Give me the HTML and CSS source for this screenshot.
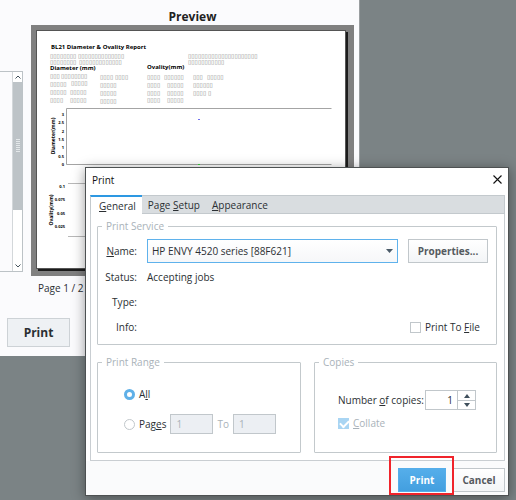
FILE: index.html
```html
<!DOCTYPE html>
<html lang="en">
<head>
  <meta charset="UTF-8">
  <meta name="viewport" content="width=device-width, initial-scale=1.0">
  <title>Print</title>
  <link rel="stylesheet" href="styles.css">
</head>
<body>
  <main class="preview-window">
    <div class="list-panel">
      <div class="scrollbar">
        <button class="scroll-btn" aria-label="Scroll up"><svg width="6" height="4" viewBox="0 0 6 4"><path d="M0.5 3.5 L3 1 L5.5 3.5" fill="none" stroke="#44525c"/></svg></button>
        <div class="scroll-thumb"><span class="grip"></span></div>
        <button class="scroll-btn" aria-label="Scroll down"><svg width="6" height="4" viewBox="0 0 6 4"><path d="M0.5 0.5 L3 3 L5.5 0.5" fill="none" stroke="#44525c"/></svg></button>
      </div>
    </div>
    <section class="preview">
      <h2>Preview</h2>
      <div class="sheet-frame">
        <svg class="sheet" viewBox="0 0 310 239">
          <g class="sheet-title">
            <text x="15" y="19">BL21 Diameter &amp; Ovality Report</text>
            <text x="14" y="40">Diameter (mm)</text>
            <text x="111" y="39">Ovality(mm)</text>
          </g>
          <g class="cells">
            <text x="14" y="28">▯▯▯▯▯▯▯▯</text>
            <text x="42" y="28">▯▯▯▯▯▯▯▯▯▯▯▯▯▯</text>
            <text x="14" y="34">▯▯▯▯▯▯▯▯</text>
            <text x="43" y="34">▯▯▯▯▯▯▯▯▯▯▯▯▯</text>
            <text x="152" y="28">▯▯▯▯▯▯</text>
            <text x="172" y="28">▯▯▯▯▯▯▯▯▯▯▯▯▯▯▯</text>
            <text x="152" y="34">▯▯▯▯▯▯▯▯▯▯▯</text>
            <text x="14" y="48">▯▯▯</text>
            <text x="25" y="48">▯▯▯▯▯▯▯▯</text>
            <text x="64" y="49">▯▯▯▯</text>
            <text x="79" y="49">▯▯▯▯</text>
            <text x="111" y="49">▯▯▯▯</text>
            <text x="128" y="49">▯▯▯▯▯▯</text>
            <text x="157" y="49">▯▯▯</text>
            <text x="171" y="49">▯▯▯▯▯</text>
            <text x="14" y="56">▯▯▯▯▯</text>
            <text x="35" y="55">▯▯▯▯▯</text>
            <text x="64" y="57">▯▯▯▯▯</text>
            <text x="111" y="57">▯▯▯▯</text>
            <text x="131" y="57">▯▯▯▯▯</text>
            <text x="157" y="57">▯▯▯▯▯▯</text>
            <text x="14" y="64">▯▯▯▯▯</text>
            <text x="34" y="64">▯▯▯▯▯</text>
            <text x="64" y="65">▯▯▯▯▯</text>
            <text x="111" y="65">▯▯▯▯</text>
            <text x="131" y="65">▯▯▯▯▯</text>
            <text x="157" y="65">▯▯▯▯</text>
            <text x="172" y="65">▯</text>
            <text x="14" y="72">▯▯▯▯</text>
            <text x="34" y="72">▯▯▯▯▯</text>
            <text x="64" y="73">▯▯▯▯▯</text>
            <text x="111" y="72">▯▯▯▯</text>
            <text x="131" y="72">▯▯▯▯▯</text>
          </g>
          <path d="M295.5 78.5 H30.5 V134.5 H295.5" fill="none" stroke="#a4a4a4"/>
          <path d="M32 153.5 H295 M32 206.5 H295" fill="none" stroke="#b8b8b8"/>
          <rect x="162" y="89" width="2" height="1" fill="#7070ee"/>
          <rect x="162" y="134" width="2" height="1" fill="#35d035"/>
          <g class="ticks">
            <text x="28" y="86">3</text>
            <text x="28" y="94">2.5</text>
            <text x="28" y="103">2</text>
            <text x="28" y="111">1.5</text>
            <text x="28" y="119">1</text>
            <text x="28" y="128">0.5</text>
            <text x="28" y="136">0</text>
            <text x="29" y="158">0.1</text>
            <text x="29" y="171">0.075</text>
            <text x="29" y="185">0.05</text>
            <text x="29" y="198">0.025</text>
          </g>
          <g class="axis">
            <text transform="translate(19 106) rotate(-90)">Diameter(mm)</text>
            <text transform="translate(17 180) rotate(-90)">Ovality(mm)</text>
          </g>
        </svg>
      </div>
      <p class="page-count">Page 1 / 2</p>
    </section>
    <button class="main-print">Print</button>
  </main>

  <div class="dialog" role="dialog" aria-label="Print">
    <div class="titlebar">
      <span>Print</span>
      <button class="close" aria-label="Close"><svg width="9" height="9" viewBox="0 0 9 9"><path d="M0.5 0.5 L8.5 8.5 M8.5 0.5 L0.5 8.5" stroke="#111" stroke-width="1.1"/></svg></button>
    </div>
    <div class="tabs">
      <button class="tab active"><u>G</u>eneral</button>
      <button class="tab">Page <u>S</u>etup</button>
      <button class="tab"><u>A</u>ppearance</button>
    </div>
    <div class="panel">
      <fieldset>
        <legend>Print Service</legend>
        <div class="service">
          <label class="key" for="printer"><u>N</u>ame:</label>
          <div class="select">
            <select id="printer"><option>HP ENVY 4520 series [88F621]</option></select>
            <svg width="7" height="4" viewBox="0 0 7 4"><path d="M0 0 H7 L3.5 4 Z" fill="#4b5b68"/></svg>
          </div>
          <button class="btn">Properties...</button>
          <span class="key">Status:</span>
          <span class="wide">Accepting jobs</span>
          <span class="key">Type:</span>
          <span class="wide"></span>
          <span class="key">Info:</span>
          <span></span>
          <label class="check to-file"><input type="checkbox"><span>Print To <u>F</u>ile</span></label>
        </div>
      </fieldset>
      <div class="groups">
        <fieldset>
          <legend>Print Range</legend>
          <div class="range">
            <label class="check"><input type="radio" name="range" checked><span>A<u>l</u>l</span></label>
            <div class="pages">
              <label class="check"><input type="radio" name="range"><span>Pag<u>e</u>s</span></label>
              <input class="num" type="text" value="1" aria-label="From page" disabled>
              <label class="dim" for="to">To</label>
              <input class="num" id="to" type="text" value="1" disabled>
            </div>
          </div>
        </fieldset>
        <fieldset>
          <legend>Copies</legend>
          <div class="copies">
            <div class="count">
              <label for="copies">Number <u>o</u>f copies:</label>
              <div class="spinner">
                <input id="copies" type="text" value="1">
                <div class="arrows">
                  <button aria-label="More"><svg width="6" height="4" viewBox="0 0 6 4"><path d="M0 4 H6 L3 0 Z" fill="#3f4f5c"/></svg></button>
                  <button aria-label="Fewer"><svg width="6" height="4" viewBox="0 0 6 4"><path d="M0 0 H6 L3 4 Z" fill="#3f4f5c"/></svg></button>
                </div>
              </div>
            </div>
            <label class="check dim"><input type="checkbox" checked disabled><span><u>C</u>ollate</span></label>
          </div>
        </fieldset>
      </div>
    </div>
    <div class="footer">
      <div class="marked"><button class="btn primary">Print</button></div>
      <button class="btn cancel">Cancel</button>
    </div>
  </div>
</body>
</html>
```

FILE: styles.css
```css
* { box-sizing: border-box; }
body {
  margin: 0;
  min-height: 100vh;
  background: #7b8385;
  color: #2b2f33;
  font: 10px/14px "Open Sans", "Noto Sans", sans-serif;
  overflow: hidden;
}
button, input, select {
  margin: 0;
  padding: 0;
  font: inherit;
  color: inherit;
}
svg { display: block; }
u { text-underline-offset: 1px; }

/* window behind the dialog */
.preview-window {
  display: grid;
  grid-template-columns: 23px 1fr;
  column-gap: 8px;
  margin-right: 156px;
  padding: 9px 5px 9px 0;
  background: #fbfbfd;
  border-right: 1px solid #9a9ea0;
}
.list-panel {
  display: flex;
  justify-content: flex-end;
  margin: 62px 0 23px;
  border: 1px solid #bcc2c6;
  border-left: 0;
}
.scrollbar {
  display: flex;
  flex-direction: column;
  width: 10px;
  background: #fff;
  border-left: 1px solid #d3d7da;
}
.scroll-btn {
  display: flex;
  align-items: center;
  justify-content: center;
  height: 10px;
  border: 0;
  background: #fff;
}
.scroll-thumb {
  display: flex;
  align-items: center;
  justify-content: center;
  height: 128px;
  margin-bottom: auto;
  background: #bdc3c7;
}
.grip {
  width: 4px;
  height: 14px;
  background: repeating-linear-gradient(#e4e8ea 0 1px, #bdc3c7 1px 2px);
}
.preview h2 {
  margin: 0;
  font-size: 12px;
  line-height: 16px;
  text-align: center;
  color: #222;
}
.sheet-frame {
  padding: 5px 8px 7px 5px;
  background: #808080;
}
.sheet {
  width: 100%;
  background: #fff;
  outline: 1px solid #555;
  outline-offset: -1px;
  box-shadow: 2px 2px 0 #1c1c1c;
}
.sheet-title {
  font-size: 6px;
  font-weight: 700;
  fill: #000;
}
.cells {
  font-family: "DejaVu Sans", sans-serif;
  font-size: 6px;
  fill: #888;
}
.ticks {
  font-size: 4px;
  font-weight: 700;
  text-anchor: end;
  fill: #000;
}
.axis {
  font-size: 5px;
  font-weight: 700;
  text-anchor: middle;
  fill: #000;
}
.page-count {
  margin: 5px 7px 0;
}
.main-print {
  grid-column: 1 / -1;
  justify-self: start;
  width: 63px;
  height: 29px;
  margin: 23px 0 0 7px;
  background: #eef1f4;
  border: 1px solid #cdd2d6;
  font-size: 12px;
  font-weight: 700;
}

/* print dialog */
.dialog {
  position: absolute;
  top: 167px;
  left: 85px;
  right: 7px;
  background: #fff;
  border: 1px solid #4d5152;
  box-shadow: 0 2px 12px rgba(0, 0, 0, 0.4);
}
.titlebar {
  display: flex;
  align-items: center;
  justify-content: space-between;
  height: 27px;
  padding: 0 6px 4px;
  color: #111;
}
.close {
  padding: 0;
  border: 0;
  background: none;
}
.tabs {
  display: flex;
  height: 19px;
  margin: 0 3px 0 4px;
  background: #d9dde0;
  border: 1px solid #c3c9cd;
}
.tab {
  padding: 0 6px;
  border: 0;
  background: none;
}
.tab.active {
  padding: 0 6px 0 8px;
  margin: -1px 0 -1px -1px;
  background: #fff;
  border-top: 2px solid #2d98e2;
  border-left: 1px solid #c3c9cd;
}
.panel {
  margin: 0 3px 0 4px;
  padding: 6px 7px 7px 6px;
  border: 1px solid #c9ced2;
  border-top: 0;
}
fieldset {
  min-width: 0;
  margin: 0;
  padding: 0;
  border: 1px solid #c3c9cc;
  border-radius: 1px;
}
legend {
  margin-left: 4px;
  padding: 0 4px;
  line-height: 12px;
  color: #a9b2b9;
}
.dim { color: #a9b2b9; }
.service {
  display: grid;
  grid-template-columns: 39px 1fr 80px;
  grid-template-rows: 24px 22px 22px 22px;
  gap: 3px 10px;
  align-items: center;
  padding: 7px 8px 6px 0;
}
.key { text-align: right; }
.wide { grid-column: 2 / -1; }
.select {
  position: relative;
  height: 24px;
}
.select select {
  appearance: none;
  width: 100%;
  height: 100%;
  padding: 0 18px 0 4px;
  background: linear-gradient(#fff, #f6f7f9);
  border: 1px solid #5fb2ec;
  border-radius: 0;
}
.select svg {
  position: absolute;
  top: 10px;
  right: 5px;
  pointer-events: none;
}
.btn {
  height: 24px;
  background: linear-gradient(#fff, #f3f5f7);
  border: 1px solid #c1c7cb;
  color: #555a5f;
  font-weight: 700;
}
.check {
  display: flex;
  align-items: center;
  gap: 4px;
  white-space: nowrap;
}
.to-file { padding-left: 2px; }
.check input {
  appearance: none;
  flex: none;
  width: 11px;
  height: 11px;
  background: #fff;
  border: 1px solid #c1c7cb;
}
.check input[type="radio"] { border-radius: 50%; }
.check input[type="radio"]:checked { border: 3px solid #5fb0e8; }
.check input[type="checkbox"]:checked {
  background: #a9d5f3;
  border-color: #a9d5f3;
}
.check input[type="checkbox"]:checked::before {
  content: "";
  display: block;
  width: 7px;
  height: 4px;
  margin: 1px;
  border: solid #fff;
  border-width: 0 0 2px 2px;
  transform: rotate(-45deg);
}
.groups {
  display: grid;
  grid-template-columns: 204fr 183fr;
  gap: 13px;
  margin-top: 11px;
}
.range {
  display: grid;
  grid-auto-rows: 20px;
  gap: 10px;
  padding: 16px 0 18px 26px;
}
.pages {
  display: flex;
  align-items: center;
  gap: 4px;
}
.num {
  width: 43px;
  height: 20px;
  padding: 0 5px;
  background: #eceff3;
  border: 1px solid #c1c7cb;
  color: #a9b2b9;
}
.copies {
  display: grid;
  grid-auto-rows: 20px;
  gap: 3px;
  padding: 22px 20px 0 23px;
}
.count {
  display: flex;
  align-items: center;
  justify-content: space-between;
  white-space: nowrap;
}
.spinner {
  display: flex;
  width: 51px;
  height: 20px;
  border: 1px solid #c1c7cb;
}
.spinner input {
  flex: 1;
  min-width: 0;
  padding-right: 4px;
  border: 0;
  text-align: right;
}
.arrows {
  display: grid;
  grid-template-rows: 1fr 1fr;
  width: 18px;
  border-left: 1px solid #c1c7cb;
}
.arrows button {
  display: flex;
  align-items: center;
  justify-content: center;
  border: 0;
  background: #fff;
}
.arrows button + button { border-top: 1px solid #c1c7cb; }
.footer {
  display: flex;
  justify-content: flex-end;
  gap: 7px;
  padding: 7px 3px 3px;
  background: #fafbfc;
}
.marked {
  position: relative;
  display: flex;
}
/* red frame drawn round the button to press */
.marked::after {
  content: "";
  position: absolute;
  inset: -12px -8px -3px -9px;
  border: 2px solid #f0242b;
  pointer-events: none;
}
.primary {
  width: 48px;
  background: linear-gradient(#55aeea, #439fdf);
  border-color: #55aeea;
  color: #fff;
  font-weight: 700;
}
.cancel { width: 52px; }
```
